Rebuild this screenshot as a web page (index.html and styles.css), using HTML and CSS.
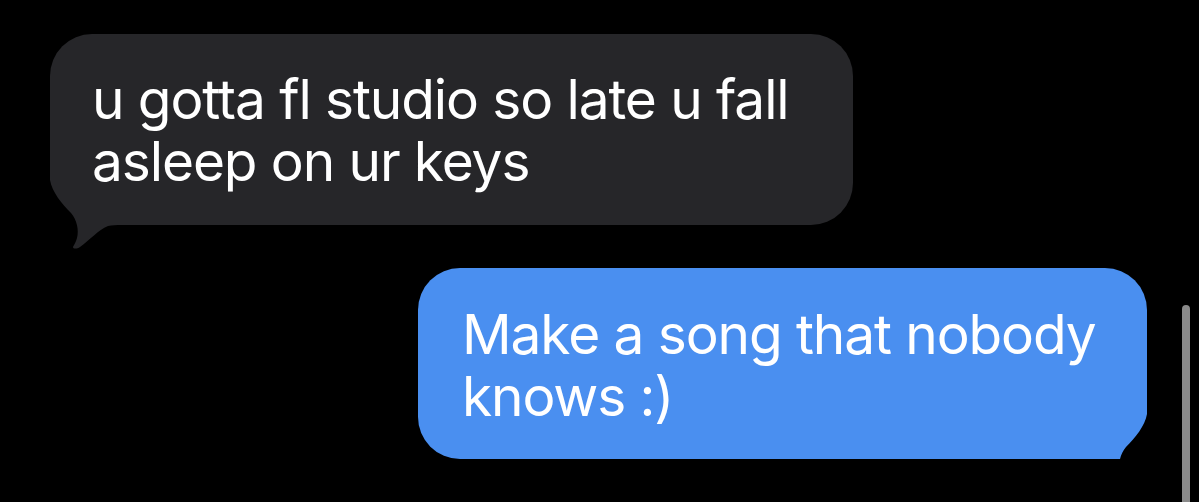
FILE: index.html
```
<!DOCTYPE html>
<html lang="en">
<head>
    <meta charset="UTF-8">
    <meta name="viewport" content="width=device-width, initial-scale=1.0">
    <title>Messages</title>
    <link rel="stylesheet" href="styles.css">
</head>
<body>
    <div class="thread">
        <!-- incoming -->
        <div class="bubble incoming">
            <svg class="tail" width="72" height="72" viewBox="0 0 72 72">
                <path class="tail-mask" d="M-2,-2 H46 V47 H-2 Z"/>
                <path class="tail-fill" d="M0,-4 L0,0 C2,12 12,24 21,33 C27,40 29,50 27,58 C26,62 24,65 23,67 C23,69 27,69 30,67 C40,60 48,50 58,46 C62,45 66,45 72,45 L72,-4 Z"/>
            </svg>
            <span class="text">u gotta fl studio so late u fall asleep on ur keys</span>
        </div>

        <!-- outgoing -->
        <div class="bubble outgoing">
            <svg class="tail" width="72" height="72" viewBox="0 0 72 72">
                <path class="tail-mask" d="M-2,-2 H46 V47 H-2 Z"/>
                <path class="tail-fill" d="M0,-4 L0,0 C2,12 12,24 21,33 C27,40 29,50 27,58 C26,62 24,65 23,67 C23,69 27,69 30,67 C40,60 48,50 58,46 C62,45 66,45 72,45 L72,-4 Z"/>
            </svg>
            <span class="text">Make a song that nobody knows :)</span>
        </div>
    </div>

    <div class="scrollbar"></div>
</body>
</html>
```

FILE: styles.css
```
body {
    margin: 0;
    padding: 0;
    background: #000;
    font-family: 'Inter', 'Liberation Sans', sans-serif;
    color: #fff;
    overflow: hidden;
}

.thread {
    display: flex;
    flex-direction: column;
    gap: 43px;
    padding: 34px 52px 0 50px;
}

.bubble {
    position: relative;
    box-sizing: border-box;
    height: 191px;
    border-radius: 42px;
    font-size: 55px;
    line-height: 62px;
    letter-spacing: -1.1px;
}

.bubble .text {
    position: relative;
    display: block;
}

.incoming {
    align-self: flex-start;
    width: 803px;
    padding: 34px 34px 0 42px;
    background: #262629;
}

.outgoing {
    align-self: flex-end;
    width: 729px;
    padding: 35px 24px 0 44px;
    background: #4a8ff0;
}

/* tail sits on the bottom corner */
.tail {
    position: absolute;
    left: 0;
    top: 146px;
    overflow: visible;
}

.outgoing .tail {
    left: auto;
    right: 0;
    transform: scaleX(-1);
}

.tail-mask {
    fill: #000;
}

.incoming .tail-fill {
    fill: #262629;
}

.outgoing .tail-fill {
    fill: #4a8ff0;
}

.scrollbar {
    position: fixed;
    left: 1182px;
    top: 305px;
    width: 8px;
    height: 220px;
    border-radius: 4px;
    background: #8a8a8a;
}
```
